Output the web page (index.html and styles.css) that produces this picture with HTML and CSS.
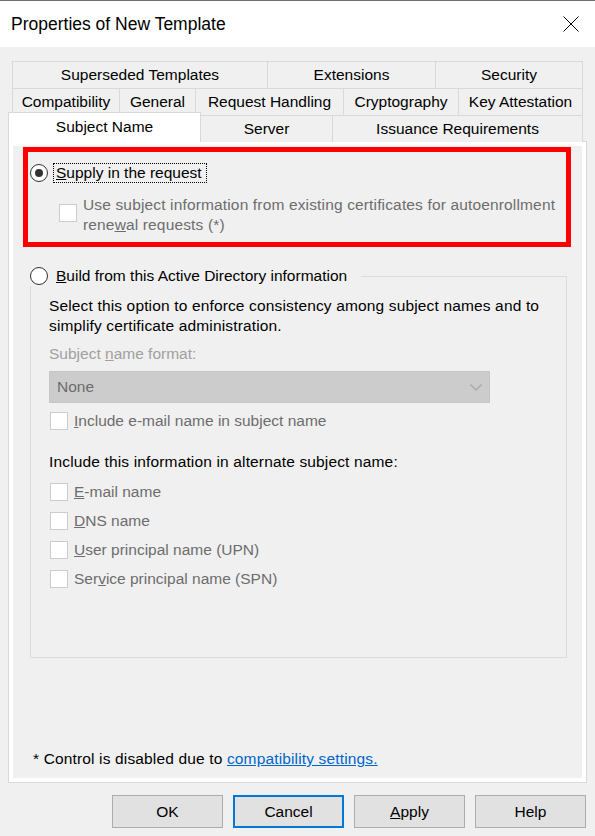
FILE: index.html
```html
<!DOCTYPE html>
<html lang="en">
<head>
<meta charset="utf-8">
<title>Properties of New Template</title>
<link rel="stylesheet" href="styles.css">
</head>
<body>
<div class="window">
  <div class="titlebar">
    <span class="title">Properties of New Template</span>
    <svg class="close" width="16" height="16" viewBox="0 0 16 16" aria-hidden="true">
      <path d="M0.5 0.5 L15.5 15.5 M15.5 0.5 L0.5 15.5" stroke="#000" stroke-width="1" fill="none"/>
    </svg>
  </div>

  <div class="tabs">
    <div class="tabrow row1">
      <div class="tab">Superseded Templates</div>
      <div class="tab">Extensions</div>
      <div class="tab">Security</div>
    </div>
    <div class="tabrow row2">
      <div class="tab">Compatibility</div>
      <div class="tab">General</div>
      <div class="tab">Request Handling</div>
      <div class="tab">Cryptography</div>
      <div class="tab">Key Attestation</div>
    </div>
    <div class="tabrow row3">
      <div class="tab selected">Subject Name</div>
      <div class="tab">Server</div>
      <div class="tab">Issuance Requirements</div>
    </div>
  </div>

  <div class="panel">
    <div class="page">
      <div class="redbox">
        <div class="radio-row">
          <span class="radio on"></span>
          <span class="focus"><u>S</u>upply in the request</span>
        </div>
        <div class="multi-row">
          <span class="checkbox"></span>
          <span class="multi-label muted wide">Use subject information from existing certificates for autoenrollment<br>rene<u>w</u>al requests (*)</span>
        </div>
      </div>

      <fieldset class="group">
        <legend class="legend">
          <span class="legend-inner">
            <span class="radio"></span>
            <span class="legend-label"><u>B</u>uild from this Active Directory information</span>
          </span>
        </legend>
        <div class="group-body">
          <div class="desc wide">Select this option to enforce consistency among subject names and to<br>simplify certificate administration.</div>
          <div class="fmt-label">Subject <u>n</u>ame format:</div>
          <div class="select">
            <span>None</span>
            <svg width="12" height="7" viewBox="0 0 12 7" aria-hidden="true">
              <path d="M0.5 0.5 L6 6 L11.5 0.5" stroke="#a6a6a6" stroke-width="1.2" fill="none"/>
            </svg>
          </div>
          <div class="check-row first">
            <span class="checkbox"></span>
            <span class="muted"><u>I</u>nclude e-mail name in subject name</span>
          </div>
          <div class="alt-label wide">Include this information in alternate subject name:</div>
          <div class="check-list">
            <div class="check-row">
              <span class="checkbox"></span>
              <span class="muted"><u>E</u>-mail name</span>
            </div>
            <div class="check-row">
              <span class="checkbox"></span>
              <span class="muted"><u>D</u>NS name</span>
            </div>
            <div class="check-row">
              <span class="checkbox"></span>
              <span class="muted"><u>U</u>ser principal name (UPN)</span>
            </div>
            <div class="check-row">
              <span class="checkbox"></span>
              <span class="muted">Ser<u>v</u>ice principal name (SPN)</span>
            </div>
          </div>
        </div>
      </fieldset>

      <div class="footer wide">* Control is disabled due to <span class="link">compatibility settings.</span></div>
    </div>
  </div>

  <div class="buttons">
    <div class="btn">OK</div>
    <div class="btn default">Cancel</div>
    <div class="btn"><span><u>A</u>pply</span></div>
    <div class="btn">Help</div>
  </div>
</div>
</body>
</html>
```

FILE: styles.css
```css
html, body {
  margin: 0;
  padding: 0;
}

body {
  background: #f0f0f0;
  font-family: "Liberation Sans", Arial, sans-serif;
  font-size: 15.5px;
  color: #000;
}

.window {
  width: 595px;
  height: 836px;
  overflow: hidden;
}

.wide {
  letter-spacing: 0.15px;
}

/* Title bar */
.titlebar {
  height: 46px;
  border-top: 1px solid #707070;
  background: #fff;
  display: flex;
  align-items: center;
  justify-content: space-between;
  padding: 0 16px 0 11px;
}

.title {
  font-size: 17.5px;
  color: #000;
}

.close {
  display: block;
}

/* Tabs */
.tabs {
  margin-top: 14px;
}

.tabrow {
  display: grid;
  width: max-content;
  border-right: 1px solid #d9d9d9;
}

.row1 {
  height: 27px;
  margin-left: 12px;
  grid-template-columns: 255px 168px 147px;
}

.row2 {
  height: 27px;
  margin-left: 12px;
  grid-template-columns: 107px 76px 148px 115px 124px;
}

.row3 {
  height: 26px;
  margin-left: 8px;
  grid-template-columns: 193px 131px 250px;
}

.tab {
  box-sizing: border-box;
  border-top: 1px solid #d9d9d9;
  border-left: 1px solid #d9d9d9;
  display: flex;
  align-items: center;
  justify-content: center;
  white-space: nowrap;
  background: #f0f0f0;
}

.tab.selected {
  background: #fff;
  height: 30px;
  margin-top: -3px;
  padding-bottom: 2px;
  border-right: 1px solid #d9d9d9;
  position: relative;
  z-index: 1;
}

.tab.selected + .tab {
  border-left: none;
}

/* Panel */
.panel {
  margin: 0 8px;
  height: 642px;
  box-sizing: border-box;
  border: 1px solid #d9d9d9;
  background: #fff;
  padding: 4px;
}

.page {
  height: 100%;
  box-sizing: border-box;
  background: #f0f0f0;
  padding: 1px 11px 0 10px;
  display: flex;
  flex-direction: column;
}

.redbox {
  height: 100px;
  box-sizing: border-box;
  border: 5px solid #ff0000;
  padding: 11px 0 0 2px;
}

.radio-row {
  display: flex;
  align-items: center;
  height: 20px;
}

.radio {
  flex: none;
  width: 18px;
  height: 18px;
  box-sizing: border-box;
  border: 1px solid #333;
  border-radius: 50%;
  background: #fff;
  display: flex;
  align-items: center;
  justify-content: center;
}

.radio.on::after {
  content: "";
  width: 8px;
  height: 8px;
  border-radius: 50%;
  background: #333;
}

.focus {
  margin-left: 5px;
  border: 1px dotted #000;
  padding: 0 4px 0 2px;
  line-height: 18px;
}

.multi-row {
  display: flex;
  align-items: center;
  margin: 12px 0 0 29px;
}

.multi-row .checkbox {
  margin-bottom: 5px;
}

.multi-label {
  margin-left: 6px;
  line-height: 20px;
}

.checkbox {
  flex: none;
  width: 18px;
  height: 18px;
  box-sizing: border-box;
  border: 1px solid #cccccc;
  background: #fff;
}

.muted {
  color: #6d6d6d;
}

/* Group box */
.group {
  margin: 19px 0 0 7px;
  width: 537px;
  height: 392px;
  box-sizing: border-box;
  border: 1px solid #dcdcdc;
  padding: 0;
  min-width: 0;
}

.legend {
  padding: 0 14px 0 0;
  margin-left: -1px;
}

.legend-inner {
  display: flex;
  align-items: center;
  height: 20px;
}

.legend-label {
  margin-left: 8px;
  white-space: nowrap;
}

.group-body {
  padding-left: 18px;
}

.desc {
  margin-top: 10px;
  line-height: 20px;
}

.fmt-label {
  margin-top: 8px;
  line-height: 20px;
  color: #a0a0a0;
}

.select {
  margin-top: 7px;
  width: 441px;
  height: 32px;
  box-sizing: border-box;
  background: #cccccc;
  border: 1px solid #c6c6c6;
  padding: 0 7px;
  display: flex;
  align-items: center;
  justify-content: space-between;
  color: #6d6d6d;
}

.check-row {
  display: flex;
  align-items: center;
  height: 20px;
  margin-left: 1px;
}

.check-row .checkbox {
  margin-right: 6px;
}

.check-row.first {
  margin-top: 8px;
}

.alt-label {
  margin-top: 21px;
  line-height: 20px;
}

.check-list {
  margin-top: 10px;
  display: flex;
  flex-direction: column;
  gap: 9px;
}

.footer {
  margin: auto 0 9px 10px;
  line-height: 20px;
}

.link {
  color: #0066cc;
  text-decoration: underline;
}

/* Buttons */
.buttons {
  margin-top: 12px;
  display: flex;
  justify-content: flex-end;
  gap: 10px;
  padding-right: 9px;
}

.btn {
  width: 111px;
  height: 33px;
  box-sizing: border-box;
  border: 1px solid #adadad;
  background: #e1e1e1;
  display: flex;
  align-items: center;
  justify-content: center;
}

.btn.default {
  border: 2px solid #0078d7;
}
```
